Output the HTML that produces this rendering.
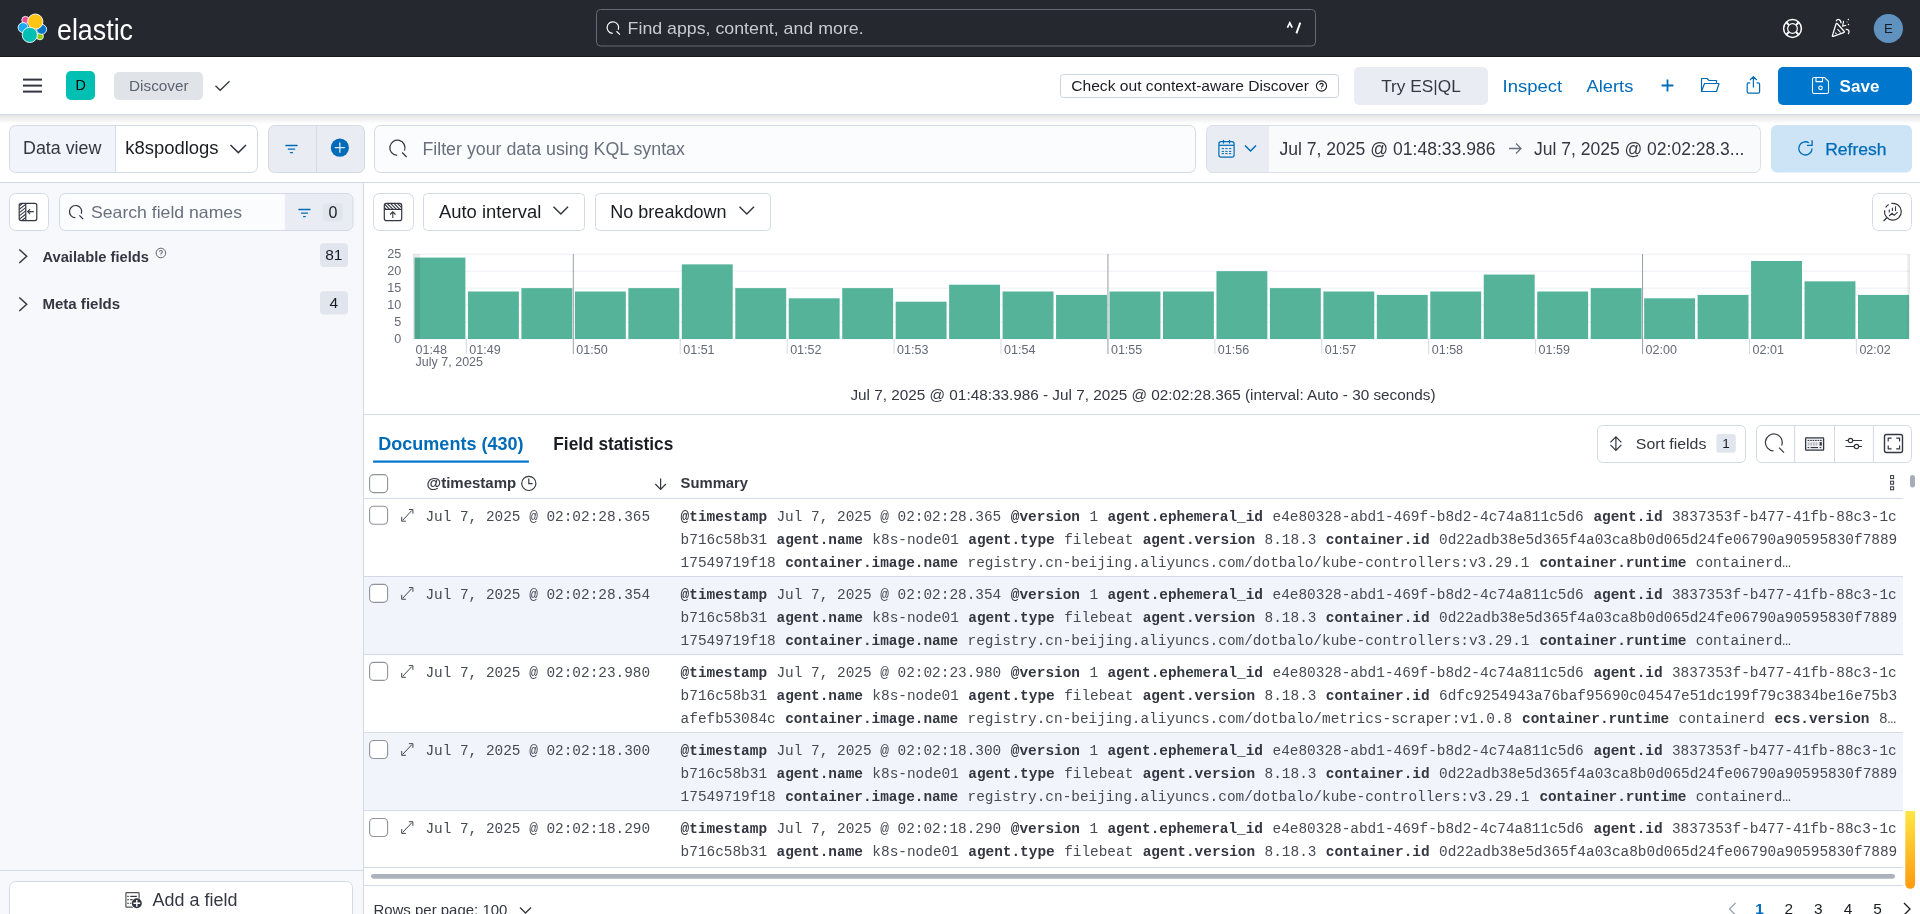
<!DOCTYPE html>
<html><head><meta charset="utf-8"><title>Discover - Elastic</title>
<style>html,body{margin:0;padding:0;width:1920px;height:914px;overflow:hidden;background:#fff;font-family:"Liberation Sans",sans-serif}svg{display:block;will-change:transform}</style>
</head><body>
<svg width="1920" height="914" viewBox="0 0 1920 914">
<rect x="0" y="0" width="1920" height="56" fill="#25282f" />
<rect x="0" y="56" width="1920" height="1" fill="#17191d" />
<circle cx="25.4" cy="20.0" r="3.6" fill="#f04e98" stroke="#fff" stroke-width="0.9"/>
<circle cx="23.1" cy="27.6" r="5.0" fill="#1ba9f5" stroke="#fff" stroke-width="0.9"/>
<circle cx="39.9" cy="36.3" r="3.5" fill="#93c90e" stroke="#fff" stroke-width="0.9"/>
<circle cx="41.6" cy="29.3" r="5.0" fill="#0077cc" stroke="#fff" stroke-width="0.9"/>
<circle cx="35.3" cy="21.6" r="7.6" fill="#fec514" stroke="#fff" stroke-width="0.9"/>
<circle cx="29.8" cy="34.9" r="7.6" fill="#00bfb3" stroke="#fff" stroke-width="0.9"/>
<g transform="translate(57,40.1) scale(1,1.13)"><text x="0" y="0" font-family="Liberation Sans" font-size="26.5" fill="#fff" textLength="76" lengthAdjust="spacingAndGlyphs">elastic</text></g>
<rect x="596.5" y="9.5" width="719" height="36.5" fill="#25282f" stroke="#676a72" stroke-width="1" rx="4" />
<path d="M612.70,33.40 A5.8,5.8 0 1 1 618.31,29.68 M616.51,31.21 L619.95,34.65" fill="none" stroke="#fff" stroke-width="1.2"/>
<text x="627.6" y="33.8" font-family="Liberation Sans" font-size="16.6" fill="#c8cbd1" textLength="236" lengthAdjust="spacingAndGlyphs" >Find apps, content, and more.</text>
<path d="M1287.4,27.6 L1289.8,22.8 L1292.2,27.6" fill="none" stroke="#fff" stroke-width="1.7" stroke-linejoin="miter"/>
<path d="M1300.3,22.6 L1296.4,33.4" fill="none" stroke="#fff" stroke-width="1.9" />
<g fill="none" stroke="#fff"><circle cx="1792.5" cy="28.5" r="8.9" stroke-width="1.5"/><circle cx="1792.5" cy="28.5" r="4.85" stroke-width="1.2"/></g>
<line x1="1796.0355339059327" y1="32.03553390593274" x2="1798.5104076400858" y2="34.51040764008565" stroke="#fff" stroke-width="1.9" />
<line x1="1788.9644660940673" y1="32.03553390593274" x2="1786.4895923599142" y2="34.51040764008565" stroke="#fff" stroke-width="1.9" />
<line x1="1788.9644660940673" y1="24.964466094067262" x2="1786.4895923599142" y2="22.489592359914347" stroke="#fff" stroke-width="1.9" />
<line x1="1796.0355339059327" y1="24.964466094067262" x2="1798.5104076400858" y2="22.489592359914344" stroke="#fff" stroke-width="1.9" />
<path d="M1832.4,35.6 L1835.9,24.2 Q1836.4,22.8 1837.4,23.8 L1844.1,31.2 Q1844.9,32.3 1843.6,32.7 L1833.3,36.3 Q1832,36.7 1832.4,35.6 Z" fill="none" stroke="#fff" stroke-width="1.3" stroke-linejoin="round"/>
<line x1="1837.5" y1="29.1" x2="1840.6" y2="32.5" stroke="#fff" stroke-width="1.1" />
<line x1="1835.2" y1="32.6" x2="1836.5" y2="34" stroke="#fff" stroke-width="1.1" />
<path d="M1836.1,21.3 C1837.5,18.6 1840.6,18.6 1841.1,23.2" fill="none" stroke="#fff" stroke-width="1.3" />
<path d="M1843.6,20.8 L1842.6,26.1 L1846.2,25.2" fill="none" stroke="#fff" stroke-width="1.1" stroke-linejoin="round"/>
<path d="M1845.7,29.5 C1848.6,28.8 1850.2,31.6 1848.2,34.1" fill="none" stroke="#fff" stroke-width="1.3" />
<circle cx="1848.4" cy="19.6" r="0.75" fill="#fff"/><circle cx="1848.5" cy="24.4" r="0.75" fill="#fff"/><circle cx="1847.1" cy="21.9" r="0.7" fill="#8a8d93"/>
<circle cx="1888.4" cy="28.5" r="14.6" fill="#6092c0"/>
<text x="1888.3" y="32.9" font-family="Liberation Sans" font-size="13.2" fill="#1a1c21" text-anchor="middle" >E</text>
<rect x="0" y="57" width="1920" height="57" fill="#fff" />
<rect x="0" y="114" width="1920" height="1" fill="#d3dae6" />
<defs><linearGradient id="shd" x1="0" y1="0" x2="0" y2="1"><stop offset="0" stop-color="#000" stop-opacity="0.10"/><stop offset="1" stop-color="#000" stop-opacity="0"/></linearGradient><linearGradient id="org" x1="0" y1="0" x2="0" y2="1"><stop offset="0" stop-color="#ffe645"/><stop offset="1" stop-color="#ff9a0e"/></linearGradient></defs>
<rect x="23" y="78.6" width="19" height="2" fill="#343741" />
<rect x="23" y="84.6" width="19" height="2" fill="#343741" />
<rect x="23" y="90.6" width="19" height="2" fill="#343741" />
<rect x="66" y="71" width="29" height="29" fill="#00bfb3" rx="5" />
<text x="80.6" y="90.4" font-family="Liberation Sans" font-size="14.3" fill="#000" text-anchor="middle" >D</text>
<rect x="114" y="72" width="89" height="28" fill="#e0e3e8" rx="5" />
<text x="129" y="91" font-family="Liberation Sans" font-size="15" fill="#5b6271" textLength="59.6" lengthAdjust="spacingAndGlyphs" >Discover</text>
<path d="M215.5,85.8 L220.2,90.3 L229.5,81.3" fill="none" stroke="#343741" stroke-width="1.3" />
<rect x="1060.5" y="74.5" width="278" height="23" fill="#fff" stroke="#c9d3e2" stroke-width="1" rx="3" />
<text x="1071.2" y="91" font-family="Liberation Sans" font-size="15" fill="#1a1c21" textLength="237.8" lengthAdjust="spacingAndGlyphs" >Check out context-aware Discover</text>
<circle cx="1321.5" cy="86.0" r="5.1" fill="none" stroke="#1a1c21" stroke-width="1.1"/>
<path d="M1319.85,84.70 Q1320.03,83.31 1321.50,83.31 Q1323.15,83.31 1323.15,84.70 Q1323.15,85.65 1322.11,86.17 Q1321.41,86.52 1321.41,87.21" fill="none" stroke="#1a1c21" stroke-width="1.1550000000000002" />
<circle cx="1321.41" cy="88.25" r="0.52" fill="#1a1c21"/>
<rect x="1354" y="67" width="134" height="38" fill="#e9edf3" rx="5" />
<text x="1381.2" y="92.3" font-family="Liberation Sans" font-size="17" fill="#343741" textLength="79.6" lengthAdjust="spacingAndGlyphs" >Try ES|QL</text>
<text x="1502.5" y="92.3" font-family="Liberation Sans" font-size="17" fill="#006bb8" textLength="59.6" lengthAdjust="spacingAndGlyphs" >Inspect</text>
<text x="1586.5" y="92.3" font-family="Liberation Sans" font-size="17" fill="#006bb8" textLength="46.8" lengthAdjust="spacingAndGlyphs" >Alerts</text>
<path d="M1667.5,79.6 V91.4 M1661.6,85.5 H1673.4" fill="none" stroke="#006bb8" stroke-width="1.8" />
<path d="M1701.5,91.5 V78.5 H1707 L1709,80.5 H1716.5 V83 M1701.5,91.5 L1704.5,83.5 H1719 L1716.5,91.5 Z" fill="none" stroke="#006bb8" stroke-width="1.2" stroke-linejoin="round"/>
<path d="M1750.2,82.8 H1748.6 Q1747.2,82.8 1747.2,84.2 V91.8 Q1747.2,93.2 1748.6,93.2 H1758.2 Q1759.6,93.2 1759.6,91.8 V84.2 Q1759.6,82.8 1758.2,82.8 H1756.6 M1753.4,87.6 V76.6 M1750,80 L1753.4,76.6 L1756.8,80" fill="none" stroke="#006bb8" stroke-width="1.2" stroke-linejoin="round"/>
<rect x="1778" y="67" width="134" height="38" fill="#0077cc" rx="5" />
<path d="M1814,77.5 H1824.5 L1828.5,81.5 V92 Q1828.5,93.5 1827,93.5 H1814 Q1812.5,93.5 1812.5,92 V79 Q1812.5,77.5 1814,77.5 Z M1816,77.5 V81.6 H1822.5 V77.5" fill="none" stroke="#fff" stroke-width="1.1" stroke-linejoin="round"/>
<circle cx="1820.5" cy="87.8" r="1.8" fill="none" stroke="#fff" stroke-width="1.1"/>
<text x="1839.6" y="92.2" font-family="Liberation Sans" font-size="17" fill="#fff" font-weight="700" textLength="39.8" lengthAdjust="spacingAndGlyphs" >Save</text>
<rect x="0" y="115" width="1920" height="68" fill="#fff" />
<rect x="0" y="115" width="1920" height="9" fill="url(#shd)" />
<rect x="0" y="182" width="1920" height="1" fill="#d3dae6" />
<clipPath id="dvc"><rect x="9.5" y="125.5" width="248" height="47" rx="6"/></clipPath>
<g clip-path="url(#dvc)">
<rect x="9.5" y="125.5" width="106" height="47" fill="#f1f4fa" />
</g>
<rect x="9.5" y="125.5" width="248" height="47" fill="none" stroke="#d3dae6" stroke-width="1" rx="6" />
<line x1="115.6" y1="125.5" x2="115.6" y2="172.5" stroke="#d3dae6" stroke-width="1" />
<text x="23" y="153.7" font-family="Liberation Sans" font-size="17.5" fill="#343741" textLength="78.4" lengthAdjust="spacingAndGlyphs" >Data view</text>
<text x="125.2" y="154.1" font-family="Liberation Sans" font-size="17.5" fill="#1a1c21" textLength="93.4" lengthAdjust="spacingAndGlyphs" >k8spodlogs</text>
<path d="M230.5,145 L238.3,152.6 L246,145" fill="none" stroke="#343741" stroke-width="1.5" />
<rect x="268.5" y="125.5" width="96" height="47" fill="#e9edf3" stroke="#d3dae6" stroke-width="1" rx="6" />
<line x1="316.6" y1="125.5" x2="316.6" y2="172.5" stroke="#d3dae6" stroke-width="1" />
<path d="M285.9,145.5 H297.1 M288.3,149.05 H294.7 M290.5,152.6 H292.5" fill="none" stroke="#006bb8" stroke-width="1.3" stroke-linecap="round"/>
<circle cx="339.85" cy="147.7" r="9.1" fill="#006bb8"/>
<path d="M339.85,142.6 V152.8 M334.75,147.7 H344.95" fill="none" stroke="#dde8f3" stroke-width="1.3" />
<rect x="374.5" y="125.5" width="821" height="47" fill="#fbfcfd" stroke="#d3dae6" stroke-width="1" rx="6" />
<path d="M397.13,155.40 A7.6,7.6 0 1 1 404.50,150.52 M402.13,152.53 L406.64,157.04" fill="none" stroke="#343741" stroke-width="1.3"/>
<text x="422.4" y="155" font-family="Liberation Sans" font-size="17.5" fill="#69707d" textLength="262.5" lengthAdjust="spacingAndGlyphs" >Filter your data using KQL syntax</text>
<clipPath id="dtc"><rect x="1206.5" y="125.5" width="554" height="47" rx="6"/></clipPath>
<g clip-path="url(#dtc)">
<rect x="1206.5" y="125.5" width="554" height="47" fill="#f9fafc" />
<rect x="1206.5" y="125.5" width="62.5" height="47" fill="#e9edf3" />
</g>
<rect x="1206.5" y="125.5" width="554" height="47" fill="none" stroke="#dcdfe5" stroke-width="1" rx="6" />
<rect x="1218.9" y="141.6" width="15.2" height="15.6" fill="none" stroke="#006bb8" stroke-width="1.2" rx="2.2" />
<line x1="1218.9" y1="145.3" x2="1234.1" y2="145.3" stroke="#006bb8" stroke-width="1.2" />
<line x1="1223.5" y1="139.9" x2="1223.5" y2="143.6" stroke="#006bb8" stroke-width="1.2" />
<line x1="1229.5" y1="139.9" x2="1229.5" y2="143.6" stroke="#006bb8" stroke-width="1.2" />
<rect x="1221.6999999999998" y="148.1" width="2.3" height="1.0" fill="#006bb8" />
<rect x="1225.25" y="148.1" width="2.3" height="1.0" fill="#006bb8" />
<rect x="1228.9499999999998" y="148.1" width="2.3" height="1.0" fill="#006bb8" />
<rect x="1221.6999999999998" y="150.9" width="2.3" height="1.0" fill="#006bb8" />
<rect x="1225.25" y="150.9" width="2.3" height="1.0" fill="#006bb8" />
<rect x="1228.9499999999998" y="150.9" width="2.3" height="1.0" fill="#006bb8" />
<rect x="1221.6999999999998" y="153.1" width="2.3" height="1.0" fill="#006bb8" />
<rect x="1225.25" y="153.1" width="2.3" height="1.0" fill="#006bb8" />
<rect x="1228.9499999999998" y="153.1" width="2.3" height="1.0" fill="#006bb8" />
<path d="M1245,145.5 L1250.5,151 L1256,145.5" fill="none" stroke="#006bb8" stroke-width="1.5" />
<text x="1279.4" y="155" font-family="Liberation Sans" font-size="17.5" fill="#343741" textLength="216.2" lengthAdjust="spacingAndGlyphs" >Jul 7, 2025 @ 01:48:33.986</text>
<path d="M1509,148.5 H1521 M1516,143.5 L1521,148.5 L1516,153.5" fill="none" stroke="#69707d" stroke-width="1.3" />
<text x="1534" y="155" font-family="Liberation Sans" font-size="17.5" fill="#343741" textLength="210.4" lengthAdjust="spacingAndGlyphs" >Jul 7, 2025 @ 02:02:28.3...</text>
<rect x="1771" y="125" width="141" height="47.5" fill="#cce4f5" rx="6" />
<path d="M1808.90,142.80 A6.6,6.6 0 1 0 1812.00,148.40" fill="none" stroke="#006bb8" stroke-width="1.3" />
<path d="M1812.1,140.2 V145.3 H1807" fill="none" stroke="#006bb8" stroke-width="1.3" stroke-linejoin="miter"/>
<text x="1825.2" y="154.6" font-family="Liberation Sans" font-size="17" fill="#006bb8" textLength="61.4" lengthAdjust="spacingAndGlyphs" stroke="#006bb8" stroke-width="0.25">Refresh</text>
<rect x="0" y="183" width="363" height="731" fill="#f7f8fc" />
<rect x="363" y="183" width="1" height="731" fill="#d3dae6" />
<rect x="9.5" y="193.5" width="39" height="37" fill="#fff" stroke="#d3dae6" stroke-width="1" rx="6" />
<clipPath id="hatch1"><rect x="19.6" y="203.6" width="6.2" height="17"/></clipPath>
<g clip-path="url(#hatch1)">
<line x1="18" y1="207.0" x2="27" y2="200.0" stroke="#343741" stroke-width="1.1" />
<line x1="18" y1="210.3" x2="27" y2="203.3" stroke="#343741" stroke-width="1.1" />
<line x1="18" y1="213.6" x2="27" y2="206.6" stroke="#343741" stroke-width="1.1" />
<line x1="18" y1="216.9" x2="27" y2="209.9" stroke="#343741" stroke-width="1.1" />
<line x1="18" y1="220.2" x2="27" y2="213.2" stroke="#343741" stroke-width="1.1" />
<line x1="18" y1="223.5" x2="27" y2="216.5" stroke="#343741" stroke-width="1.1" />
<line x1="18" y1="226.8" x2="27" y2="219.8" stroke="#343741" stroke-width="1.1" />
</g>
<rect x="19.2" y="203.4" width="17.6" height="17.2" fill="none" stroke="#343741" stroke-width="1.2" rx="2" />
<line x1="25.8" y1="203.4" x2="25.8" y2="220.6" stroke="#343741" stroke-width="1.2" />
<path d="M33.8,211.6 H27.9 M30.1,209.2 L27.7,211.6 L30.1,214" fill="none" stroke="#343741" stroke-width="1.1" />
<clipPath id="sfc"><rect x="59.5" y="193.5" width="293.5" height="37" rx="6"/></clipPath>
<g clip-path="url(#sfc)">
<rect x="59.5" y="193.5" width="293.5" height="37" fill="#fbfcfd" />
<rect x="284.8" y="193.5" width="70" height="37" fill="#e9edf3" />
</g>
<rect x="59.5" y="193.5" width="293.5" height="37" fill="none" stroke="#d3dae6" stroke-width="1" rx="6" />
<path d="M75.39,217.70 A6.1,6.1 0 1 1 81.29,213.79 M79.40,215.40 L83.02,219.02" fill="none" stroke="#343741" stroke-width="1.2"/>
<text x="91" y="218.4" font-family="Liberation Sans" font-size="16.5" fill="#69707d" textLength="151" lengthAdjust="spacingAndGlyphs" >Search field names</text>
<path d="M298.9,209.5 H310 M301.6,213.2 H307.5 M303.6,216.6 H305.3" fill="none" stroke="#006bb8" stroke-width="1.3" stroke-linecap="round"/>
<rect x="322.7" y="203.3" width="20.3" height="18.3" fill="#e0e5ee" rx="4" />
<text x="332.9" y="218.1" font-family="Liberation Sans" font-size="16" fill="#1a1c21" text-anchor="middle" >0</text>
<path d="M19.3,249.5 L26.7,256.2 L19.3,263" fill="none" stroke="#343741" stroke-width="1.5" />
<text x="42.4" y="261.5" font-family="Liberation Sans" font-size="15.2" fill="#343741" font-weight="700" textLength="106.6" lengthAdjust="spacingAndGlyphs" >Available fields</text>
<circle cx="160.9" cy="253.0" r="4.8" fill="none" stroke="#5f6570" stroke-width="1.0"/>
<path d="M159.35,251.78 Q159.51,250.47 160.90,250.47 Q162.45,250.47 162.45,251.78 Q162.45,252.67 161.47,253.16 Q160.82,253.49 160.82,254.14" fill="none" stroke="#5f6570" stroke-width="1.05" />
<circle cx="160.82" cy="255.12" r="0.49" fill="#5f6570"/>
<rect x="320" y="243.2" width="28" height="23.8" fill="#e0e5ee" rx="4" />
<text x="333.8" y="260.4" font-family="Liberation Sans" font-size="15.5" fill="#1a1c21" text-anchor="middle" >81</text>
<path d="M19.3,297.5 L26.7,304.2 L19.3,311" fill="none" stroke="#343741" stroke-width="1.5" />
<text x="42.4" y="309.3" font-family="Liberation Sans" font-size="15.2" fill="#343741" font-weight="700" textLength="77.8" lengthAdjust="spacingAndGlyphs" >Meta fields</text>
<rect x="320" y="291.2" width="28" height="23.3" fill="#e0e5ee" rx="4" />
<text x="333.8" y="308.4" font-family="Liberation Sans" font-size="15.5" fill="#1a1c21" text-anchor="middle" >4</text>
<rect x="0" y="870" width="363" height="1" fill="#d3dae6" />
<rect x="9.5" y="881.5" width="343" height="44" fill="#fff" stroke="#d3dae6" stroke-width="1" rx="6" />
<rect x="125.9" y="892.6" width="13.2" height="14.6" fill="none" stroke="#50545c" stroke-width="1.2" rx="0.6" />
<rect x="127.3" y="895.8" width="1.5" height="1.2" fill="#343741" />
<rect x="130.2" y="895.8" width="6.6" height="1.2" fill="#343741" />
<rect x="127.3" y="899.1" width="1.5" height="1.2" fill="#343741" />
<rect x="130.2" y="899.1" width="6.6" height="1.2" fill="#343741" />
<rect x="127.3" y="902.6999999999999" width="1.5" height="1.2" fill="#343741" />
<rect x="130.2" y="902.6999999999999" width="6.6" height="1.2" fill="#343741" />
<circle cx="136.8" cy="903.3" r="5.6" fill="#fff"/>
<circle cx="136.8" cy="903.3" r="5.0" fill="#343741"/>
<path d="M136.8,899.9 V906.7 M133.4,903.3 H140.2" fill="none" stroke="#fff" stroke-width="1.4" />
<text x="152.6" y="905.9" font-family="Liberation Sans" font-size="17.5" fill="#343741" textLength="84.8" lengthAdjust="spacingAndGlyphs" >Add a field</text>
<rect x="373.5" y="193.5" width="40" height="37" fill="#fff" stroke="#d3dae6" stroke-width="1" rx="6" />
<clipPath id="hatch2"><rect x="384.6" y="203.5" width="17" height="5.9"/></clipPath>
<g clip-path="url(#hatch2)">
<line x1="380.0" y1="203" x2="386.5" y2="209.6" stroke="#343741" stroke-width="1.1" />
<line x1="383.4" y1="203" x2="389.9" y2="209.6" stroke="#343741" stroke-width="1.1" />
<line x1="386.8" y1="203" x2="393.3" y2="209.6" stroke="#343741" stroke-width="1.1" />
<line x1="390.2" y1="203" x2="396.7" y2="209.6" stroke="#343741" stroke-width="1.1" />
<line x1="393.6" y1="203" x2="400.1" y2="209.6" stroke="#343741" stroke-width="1.1" />
<line x1="397.0" y1="203" x2="403.5" y2="209.6" stroke="#343741" stroke-width="1.1" />
<line x1="400.4" y1="203" x2="406.9" y2="209.6" stroke="#343741" stroke-width="1.1" />
<line x1="403.8" y1="203" x2="410.3" y2="209.6" stroke="#343741" stroke-width="1.1" />
</g>
<rect x="384.3" y="203.4" width="17.4" height="17.2" fill="none" stroke="#343741" stroke-width="1.2" rx="2.2" />
<line x1="384.3" y1="209.4" x2="401.7" y2="209.4" stroke="#343741" stroke-width="1.2" />
<path d="M392.8,217.9 V212 M390.1,214.5 L392.8,211.8 L395.5,214.5" fill="none" stroke="#343741" stroke-width="1.1" />
<rect x="423.5" y="193.5" width="161" height="37" fill="#fff" stroke="#d3dae6" stroke-width="1" rx="4" />
<text x="439" y="218.2" font-family="Liberation Sans" font-size="17.5" fill="#1a1c21" textLength="102.3" lengthAdjust="spacingAndGlyphs" >Auto interval</text>
<path d="M553.5,206.8 L560.8,214 L568,206.8" fill="none" stroke="#343741" stroke-width="1.5" />
<rect x="595.5" y="193.5" width="175" height="37" fill="#fff" stroke="#d3dae6" stroke-width="1" rx="4" />
<text x="610.3" y="218.2" font-family="Liberation Sans" font-size="17.5" fill="#1a1c21" textLength="116.2" lengthAdjust="spacingAndGlyphs" >No breakdown</text>
<path d="M739.5,206.8 L746.8,214 L754,206.8" fill="none" stroke="#343741" stroke-width="1.5" />
<rect x="1872.5" y="193.5" width="39" height="37" fill="#fff" stroke="#d3dae6" stroke-width="1" rx="6" />
<path d="M1891.37,203.44 A8.4,8.4 0 1 1 1884.63,210.24 M1885.63,207.50 A8.4,8.4 0 0 1 1888.70,204.43" fill="none" stroke="#343741" stroke-width="1.2" />
<line x1="1886.8" y1="217.8" x2="1883.6" y2="221" stroke="#343741" stroke-width="1.3" />
<path d="M1889.1,216 L1892.1,213.3 L1894.2,215.3 L1897.6,212.1" fill="none" stroke="#343741" stroke-width="1.1" />
<line x1="1889.3" y1="209.5" x2="1889.3" y2="212.6" stroke="#343741" stroke-width="1.1" />
<line x1="1892.4" y1="207.8" x2="1892.4" y2="211.1" stroke="#343741" stroke-width="1.1" />
<line x1="1895.5" y1="206.3" x2="1895.5" y2="211.1" stroke="#343741" stroke-width="1.1" />
<line x1="413.4" y1="254.2" x2="1910" y2="254.2" stroke="#eceff5" stroke-width="1" />
<line x1="413.4" y1="271.1" x2="1910" y2="271.1" stroke="#eceff5" stroke-width="1" />
<line x1="413.4" y1="288.1" x2="1910" y2="288.1" stroke="#eceff5" stroke-width="1" />
<line x1="413.4" y1="305.0" x2="1910" y2="305.0" stroke="#eceff5" stroke-width="1" />
<line x1="413.4" y1="322.0" x2="1910" y2="322.0" stroke="#eceff5" stroke-width="1" />
<line x1="413.4" y1="339.0" x2="1910" y2="339.0" stroke="#eceff5" stroke-width="1" />
<line x1="413.4" y1="254" x2="413.4" y2="339" stroke="#e8ebf2" stroke-width="1" />
<text x="401.2" y="257.9" font-family="Liberation Sans" font-size="12.6" fill="#646a77" text-anchor="end" >25</text>
<text x="401.2" y="274.8" font-family="Liberation Sans" font-size="12.6" fill="#646a77" text-anchor="end" >20</text>
<text x="401.2" y="291.8" font-family="Liberation Sans" font-size="12.6" fill="#646a77" text-anchor="end" >15</text>
<text x="401.2" y="308.7" font-family="Liberation Sans" font-size="12.6" fill="#646a77" text-anchor="end" >10</text>
<text x="401.2" y="325.7" font-family="Liberation Sans" font-size="12.6" fill="#646a77" text-anchor="end" >5</text>
<text x="401.2" y="342.7" font-family="Liberation Sans" font-size="12.6" fill="#646a77" text-anchor="end" >0</text>
<rect x="414.5" y="257.59" width="50.9" height="81.41" fill="#54b399" />
<rect x="467.96" y="291.51" width="50.9" height="47.49" fill="#54b399" />
<rect x="521.43" y="288.12" width="50.9" height="50.88" fill="#54b399" />
<rect x="574.89" y="291.51" width="50.9" height="47.49" fill="#54b399" />
<rect x="628.35" y="288.12" width="50.9" height="50.88" fill="#54b399" />
<rect x="681.81" y="264.38" width="50.9" height="74.62" fill="#54b399" />
<rect x="735.28" y="288.12" width="50.9" height="50.88" fill="#54b399" />
<rect x="788.74" y="298.3" width="50.9" height="40.7" fill="#54b399" />
<rect x="842.2" y="288.12" width="50.9" height="50.88" fill="#54b399" />
<rect x="895.67" y="301.69" width="50.9" height="37.31" fill="#54b399" />
<rect x="949.13" y="284.73" width="50.9" height="54.27" fill="#54b399" />
<rect x="1002.59" y="291.51" width="50.9" height="47.49" fill="#54b399" />
<rect x="1056.06" y="294.9" width="50.9" height="44.1" fill="#54b399" />
<rect x="1109.52" y="291.51" width="50.9" height="47.49" fill="#54b399" />
<rect x="1162.98" y="291.51" width="50.9" height="47.49" fill="#54b399" />
<rect x="1216.44" y="271.16" width="50.9" height="67.84" fill="#54b399" />
<rect x="1269.91" y="288.12" width="50.9" height="50.88" fill="#54b399" />
<rect x="1323.37" y="291.51" width="50.9" height="47.49" fill="#54b399" />
<rect x="1376.83" y="294.9" width="50.9" height="44.1" fill="#54b399" />
<rect x="1430.3" y="291.51" width="50.9" height="47.49" fill="#54b399" />
<rect x="1483.76" y="274.55" width="50.9" height="64.45" fill="#54b399" />
<rect x="1537.22" y="291.51" width="50.9" height="47.49" fill="#54b399" />
<rect x="1590.69" y="288.12" width="50.9" height="50.88" fill="#54b399" />
<rect x="1644.15" y="298.3" width="50.9" height="40.7" fill="#54b399" />
<rect x="1697.61" y="294.9" width="50.9" height="44.1" fill="#54b399" />
<rect x="1751.08" y="260.98" width="50.9" height="78.02" fill="#54b399" />
<rect x="1804.54" y="281.34" width="50.9" height="57.66" fill="#54b399" />
<rect x="1858.0" y="294.9" width="50.9" height="44.1" fill="#54b399" />
<rect x="413.4" y="254" width="6.6" height="85" fill="#000" opacity="0.08"/>
<rect x="1907.4" y="254" width="2.6" height="85" fill="#000" opacity="0.08"/>
<line x1="466.363" y1="339" x2="466.363" y2="354" stroke="#d6dae0" stroke-width="1" />
<text x="469.363" y="353.8" font-family="Liberation Sans" font-size="12.6" fill="#646a77" textLength="31.4" lengthAdjust="spacingAndGlyphs" >01:49</text>
<line x1="573.289" y1="254" x2="573.289" y2="354" stroke="#9da2aa" stroke-width="1.05" />
<text x="576.289" y="353.8" font-family="Liberation Sans" font-size="12.6" fill="#646a77" textLength="31.4" lengthAdjust="spacingAndGlyphs" >01:50</text>
<line x1="680.215" y1="339" x2="680.215" y2="354" stroke="#d6dae0" stroke-width="1" />
<text x="683.215" y="353.8" font-family="Liberation Sans" font-size="12.6" fill="#646a77" textLength="31.4" lengthAdjust="spacingAndGlyphs" >01:51</text>
<line x1="787.1410000000001" y1="339" x2="787.1410000000001" y2="354" stroke="#d6dae0" stroke-width="1" />
<text x="790.1410000000001" y="353.8" font-family="Liberation Sans" font-size="12.6" fill="#646a77" textLength="31.4" lengthAdjust="spacingAndGlyphs" >01:52</text>
<line x1="894.067" y1="339" x2="894.067" y2="354" stroke="#d6dae0" stroke-width="1" />
<text x="897.067" y="353.8" font-family="Liberation Sans" font-size="12.6" fill="#646a77" textLength="31.4" lengthAdjust="spacingAndGlyphs" >01:53</text>
<line x1="1000.9929999999999" y1="339" x2="1000.9929999999999" y2="354" stroke="#d6dae0" stroke-width="1" />
<text x="1003.9929999999999" y="353.8" font-family="Liberation Sans" font-size="12.6" fill="#646a77" textLength="31.4" lengthAdjust="spacingAndGlyphs" >01:54</text>
<line x1="1107.919" y1="254" x2="1107.919" y2="354" stroke="#9da2aa" stroke-width="1.05" />
<text x="1110.919" y="353.8" font-family="Liberation Sans" font-size="12.6" fill="#646a77" textLength="31.4" lengthAdjust="spacingAndGlyphs" >01:55</text>
<line x1="1214.845" y1="339" x2="1214.845" y2="354" stroke="#d6dae0" stroke-width="1" />
<text x="1217.845" y="353.8" font-family="Liberation Sans" font-size="12.6" fill="#646a77" textLength="31.4" lengthAdjust="spacingAndGlyphs" >01:56</text>
<line x1="1321.771" y1="339" x2="1321.771" y2="354" stroke="#d6dae0" stroke-width="1" />
<text x="1324.771" y="353.8" font-family="Liberation Sans" font-size="12.6" fill="#646a77" textLength="31.4" lengthAdjust="spacingAndGlyphs" >01:57</text>
<line x1="1428.6970000000001" y1="339" x2="1428.6970000000001" y2="354" stroke="#d6dae0" stroke-width="1" />
<text x="1431.6970000000001" y="353.8" font-family="Liberation Sans" font-size="12.6" fill="#646a77" textLength="31.4" lengthAdjust="spacingAndGlyphs" >01:58</text>
<line x1="1535.623" y1="339" x2="1535.623" y2="354" stroke="#d6dae0" stroke-width="1" />
<text x="1538.623" y="353.8" font-family="Liberation Sans" font-size="12.6" fill="#646a77" textLength="31.4" lengthAdjust="spacingAndGlyphs" >01:59</text>
<line x1="1642.5490000000002" y1="254" x2="1642.5490000000002" y2="354" stroke="#9da2aa" stroke-width="1.05" />
<text x="1645.5490000000002" y="353.8" font-family="Liberation Sans" font-size="12.6" fill="#646a77" textLength="31.4" lengthAdjust="spacingAndGlyphs" >02:00</text>
<line x1="1749.4750000000001" y1="339" x2="1749.4750000000001" y2="354" stroke="#d6dae0" stroke-width="1" />
<text x="1752.4750000000001" y="353.8" font-family="Liberation Sans" font-size="12.6" fill="#646a77" textLength="31.4" lengthAdjust="spacingAndGlyphs" >02:01</text>
<line x1="1856.401" y1="339" x2="1856.401" y2="354" stroke="#d6dae0" stroke-width="1" />
<text x="1859.401" y="353.8" font-family="Liberation Sans" font-size="12.6" fill="#646a77" textLength="31.4" lengthAdjust="spacingAndGlyphs" >02:02</text>
<text x="415.6" y="353.8" font-family="Liberation Sans" font-size="12.6" fill="#646a77" textLength="31.4" lengthAdjust="spacingAndGlyphs" >01:48</text>
<text x="415.6" y="365.9" font-family="Liberation Sans" font-size="12.6" fill="#646a77" textLength="67.4" lengthAdjust="spacingAndGlyphs" >July 7, 2025</text>
<text x="850.4" y="400.2" font-family="Liberation Sans" font-size="15.3" fill="#343741" textLength="585.2" lengthAdjust="spacingAndGlyphs" >Jul 7, 2025 @ 01:48:33.986 - Jul 7, 2025 @ 02:02:28.365 (interval: Auto - 30 seconds)</text>
<rect x="364" y="414" width="1556" height="1" fill="#d3dae6" />
<text x="378.3" y="450" font-family="Liberation Sans" font-size="17.5" fill="#006bb8" font-weight="700" textLength="145.2" lengthAdjust="spacingAndGlyphs" >Documents (430)</text>
<rect x="373.1" y="460.5" width="155.8" height="2.2" fill="#0077cc" />
<text x="553.3" y="450" font-family="Liberation Sans" font-size="17.5" fill="#1a1c21" font-weight="700" textLength="120" lengthAdjust="spacingAndGlyphs" >Field statistics</text>
<rect x="1597.5" y="425.5" width="148" height="37" fill="#fff" stroke="#d3dae6" stroke-width="1" rx="5" />
<path d="M1615.9,437 V450.2 M1610.4,442.3 L1615.9,436.8 L1621.4,442.3 M1610.4,444.9 L1615.9,450.4 L1621.4,444.9" fill="none" stroke="#343741" stroke-width="1.2" />
<text x="1635.8" y="448.6" font-family="Liberation Sans" font-size="15.4" fill="#343741" textLength="70.6" lengthAdjust="spacingAndGlyphs" >Sort fields</text>
<rect x="1716.4" y="434" width="19.4" height="18.7" fill="#e0e5ee" rx="3" />
<text x="1726" y="448.2" font-family="Liberation Sans" font-size="13.5" fill="#1a1c21" text-anchor="middle" >1</text>
<rect x="1756.5" y="425.5" width="155" height="37" fill="#fff" stroke="#d3dae6" stroke-width="1" rx="5" />
<line x1="1794.6" y1="425.5" x2="1794.6" y2="462.5" stroke="#d3dae6" stroke-width="1" />
<line x1="1834.5" y1="425.5" x2="1834.5" y2="462.5" stroke="#d3dae6" stroke-width="1" />
<line x1="1873.4" y1="425.5" x2="1873.4" y2="462.5" stroke="#d3dae6" stroke-width="1" />
<path d="M1773.51,450.79 A8.4,8.4 0 1 1 1781.64,445.41 M1779.03,447.63 L1784.02,452.62" fill="none" stroke="#343741" stroke-width="1.2"/>
<rect x="1805.6" y="437.8" width="18" height="12.4" fill="#f0f1f3" stroke="#343741" stroke-width="1.3" rx="0.5" />
<rect x="1807.6" y="439.9" width="1.6" height="1.1" fill="#343741" />
<rect x="1810.1" y="439.9" width="1.6" height="1.1" fill="#343741" />
<rect x="1812.6" y="439.9" width="1.6" height="1.1" fill="#343741" />
<rect x="1815.1" y="439.9" width="1.6" height="1.1" fill="#343741" />
<rect x="1817.6" y="439.9" width="1.6" height="1.1" fill="#343741" />
<rect x="1820.1" y="439.9" width="1.6" height="1.1" fill="#343741" />
<rect x="1807.8" y="442.4" width="1.8" height="3.2" fill="#b9bcc2" />
<rect x="1810.3999999999999" y="442.4" width="1.8" height="3.2" fill="#b9bcc2" />
<rect x="1813.0" y="442.4" width="1.8" height="3.2" fill="#b9bcc2" />
<rect x="1815.6" y="442.4" width="1.8" height="3.2" fill="#b9bcc2" />
<rect x="1819.6" y="442.1" width="2.2" height="3.6" fill="#343741" />
<rect x="1807.6" y="447" width="1.6" height="1.1" fill="#343741" />
<rect x="1810.6" y="447" width="7.4" height="1.1" fill="#343741" />
<rect x="1819.6" y="447" width="1.6" height="1.1" fill="#343741" />
<path d="M1845.5,440.5 H1862 M1845.5,446.5 H1862" fill="none" stroke="#343741" stroke-width="1.2" />
<circle cx="1850.5" cy="440.5" r="2.2" fill="#fff" stroke="#343741" stroke-width="1.2"/><circle cx="1856.5" cy="446.5" r="2.2" fill="#fff" stroke="#343741" stroke-width="1.2"/>
<rect x="1884.5" y="434.5" width="18" height="18" fill="none" stroke="#343741" stroke-width="1.4" rx="2" />
<path d="M1888.2,441.6 V438.2 H1891.6 M1896.2,438.2 H1899.6 V441.6 M1899.6,445.4 V448.8 H1896.2 M1891.6,448.8 H1888.2 V445.4" fill="none" stroke="#343741" stroke-width="1.2" stroke-linejoin="miter" stroke-linecap="butt"/>
<rect x="369.6" y="474.6" width="18" height="18" fill="#fff" stroke="#909399" stroke-width="1.1" rx="4" />
<text x="426.6" y="487.6" font-family="Liberation Sans" font-size="14.6" fill="#343741" font-weight="700" textLength="89.6" lengthAdjust="spacingAndGlyphs" >@timestamp</text>
<circle cx="528.8" cy="483.4" r="7.1" fill="none" stroke="#343741" stroke-width="1.2"/>
<path d="M528.8,478.6 V483.6 H532.6" fill="none" stroke="#343741" stroke-width="1.2" />
<path d="M660.6,478.5 V489.2 M655.3,484 L660.6,489.3 L665.9,484" fill="none" stroke="#343741" stroke-width="1.2" />
<text x="680.6" y="487.6" font-family="Liberation Sans" font-size="14.6" fill="#343741" font-weight="700" textLength="67.4" lengthAdjust="spacingAndGlyphs" >Summary</text>
<rect x="1890.6" y="475.6" width="3" height="3" fill="none" stroke="#343741" stroke-width="1" />
<rect x="1890.6" y="481.2" width="3" height="3" fill="none" stroke="#343741" stroke-width="1" />
<rect x="1890.6" y="486.8" width="3" height="3" fill="none" stroke="#343741" stroke-width="1" />
<rect x="1910" y="475" width="5" height="12.5" fill="#a7acb6" rx="2.5" />
<rect x="364" y="498" width="1539" height="1" fill="#d3dae6" />
<rect x="364" y="576.0" width="1539" height="1" fill="#d3dae6" />
<rect x="369.6" y="506.3" width="18" height="18" fill="#fff" stroke="#909399" stroke-width="1.1" rx="4" />
<path d="M402.6,520.30 L411.8,510.50 M401.7,516.80 V521.20 H405.9 M408.9,509.50 H412.9 V513.70" fill="none" stroke="#41454e" stroke-width="1.0" stroke-linejoin="miter"/>
<text y="520.6" font-family="Liberation Mono" font-size="14.42" fill="#464a53" xml:space="preserve"><tspan x="425.40">Jul 7, 2025 @ 02:02:28.365</tspan></text>
<text y="520.6" font-family="Liberation Mono" font-size="14.42" fill="#464a53" xml:space="preserve"><tspan x="680.60" font-weight="700" fill="#343741">@timestamp</tspan><tspan x="767.83"> Jul 7, 2025 @ 02:02:28.365 </tspan><tspan x="1010.83" font-weight="700" fill="#343741">@version</tspan><tspan x="1080.76"> 1 </tspan><tspan x="1107.42" font-weight="700" fill="#343741">agent.ephemeral_id</tspan><tspan x="1263.88"> e4e80328-abd1-469f-b8d2-4c74a811c5d6 </tspan><tspan x="1593.41" font-weight="700" fill="#343741">agent.id</tspan><tspan x="1663.34"> 3837353f-b477-41fb-88c3-1c</tspan></text>
<text y="543.7" font-family="Liberation Mono" font-size="14.42" fill="#464a53" xml:space="preserve"><tspan x="680.60">b716c58b31 </tspan><tspan x="776.49" font-weight="700" fill="#343741">agent.name</tspan><tspan x="863.72"> k8s-node01 </tspan><tspan x="968.26" font-weight="700" fill="#343741">agent.type</tspan><tspan x="1055.50"> filebeat </tspan><tspan x="1142.73" font-weight="700" fill="#343741">agent.version</tspan><tspan x="1255.92"> 8.18.3 </tspan><tspan x="1325.85" font-weight="700" fill="#343741">container.id</tspan><tspan x="1430.39"> 0d22adb38e5d365f4a03ca8b0d065d24fe06790a90595830f7889</tspan></text>
<text y="566.8" font-family="Liberation Mono" font-size="14.42" fill="#464a53" xml:space="preserve"><tspan x="680.60">17549719f18 </tspan><tspan x="785.14" font-weight="700" fill="#343741">container.image.name</tspan><tspan x="958.91"> registry.cn-beijing.aliyuncs.com/dotbalo/kube-controllers:v3.29.1 </tspan><tspan x="1539.39" font-weight="700" fill="#343741">container.runtime</tspan><tspan x="1687.20"> containerd…</tspan></text>
<rect x="364" y="577.05" width="1539" height="77.5" fill="#f1f4fa" />
<rect x="364" y="654.05" width="1539" height="1" fill="#d3dae6" />
<rect x="369.6" y="584.3499999999999" width="18" height="18" fill="#fff" stroke="#909399" stroke-width="1.1" rx="4" />
<path d="M402.6,598.35 L411.8,588.55 M401.7,594.85 V599.25 H405.9 M408.9,587.55 H412.9 V591.75" fill="none" stroke="#41454e" stroke-width="1.0" stroke-linejoin="miter"/>
<text y="598.65" font-family="Liberation Mono" font-size="14.42" fill="#464a53" xml:space="preserve"><tspan x="425.40">Jul 7, 2025 @ 02:02:28.354</tspan></text>
<text y="598.65" font-family="Liberation Mono" font-size="14.42" fill="#464a53" xml:space="preserve"><tspan x="680.60" font-weight="700" fill="#343741">@timestamp</tspan><tspan x="767.83"> Jul 7, 2025 @ 02:02:28.354 </tspan><tspan x="1010.83" font-weight="700" fill="#343741">@version</tspan><tspan x="1080.76"> 1 </tspan><tspan x="1107.42" font-weight="700" fill="#343741">agent.ephemeral_id</tspan><tspan x="1263.88"> e4e80328-abd1-469f-b8d2-4c74a811c5d6 </tspan><tspan x="1593.41" font-weight="700" fill="#343741">agent.id</tspan><tspan x="1663.34"> 3837353f-b477-41fb-88c3-1c</tspan></text>
<text y="621.75" font-family="Liberation Mono" font-size="14.42" fill="#464a53" xml:space="preserve"><tspan x="680.60">b716c58b31 </tspan><tspan x="776.49" font-weight="700" fill="#343741">agent.name</tspan><tspan x="863.72"> k8s-node01 </tspan><tspan x="968.26" font-weight="700" fill="#343741">agent.type</tspan><tspan x="1055.50"> filebeat </tspan><tspan x="1142.73" font-weight="700" fill="#343741">agent.version</tspan><tspan x="1255.92"> 8.18.3 </tspan><tspan x="1325.85" font-weight="700" fill="#343741">container.id</tspan><tspan x="1430.39"> 0d22adb38e5d365f4a03ca8b0d065d24fe06790a90595830f7889</tspan></text>
<text y="644.8499999999999" font-family="Liberation Mono" font-size="14.42" fill="#464a53" xml:space="preserve"><tspan x="680.60">17549719f18 </tspan><tspan x="785.14" font-weight="700" fill="#343741">container.image.name</tspan><tspan x="958.91"> registry.cn-beijing.aliyuncs.com/dotbalo/kube-controllers:v3.29.1 </tspan><tspan x="1539.39" font-weight="700" fill="#343741">container.runtime</tspan><tspan x="1687.20"> containerd…</tspan></text>
<rect x="364" y="732.1" width="1539" height="1" fill="#d3dae6" />
<rect x="369.6" y="662.4" width="18" height="18" fill="#fff" stroke="#909399" stroke-width="1.1" rx="4" />
<path d="M402.6,676.40 L411.8,666.60 M401.7,672.90 V677.30 H405.9 M408.9,665.60 H412.9 V669.80" fill="none" stroke="#41454e" stroke-width="1.0" stroke-linejoin="miter"/>
<text y="676.7" font-family="Liberation Mono" font-size="14.42" fill="#464a53" xml:space="preserve"><tspan x="425.40">Jul 7, 2025 @ 02:02:23.980</tspan></text>
<text y="676.7" font-family="Liberation Mono" font-size="14.42" fill="#464a53" xml:space="preserve"><tspan x="680.60" font-weight="700" fill="#343741">@timestamp</tspan><tspan x="767.83"> Jul 7, 2025 @ 02:02:23.980 </tspan><tspan x="1010.83" font-weight="700" fill="#343741">@version</tspan><tspan x="1080.76"> 1 </tspan><tspan x="1107.42" font-weight="700" fill="#343741">agent.ephemeral_id</tspan><tspan x="1263.88"> e4e80328-abd1-469f-b8d2-4c74a811c5d6 </tspan><tspan x="1593.41" font-weight="700" fill="#343741">agent.id</tspan><tspan x="1663.34"> 3837353f-b477-41fb-88c3-1c</tspan></text>
<text y="699.8000000000001" font-family="Liberation Mono" font-size="14.42" fill="#464a53" xml:space="preserve"><tspan x="680.60">b716c58b31 </tspan><tspan x="776.49" font-weight="700" fill="#343741">agent.name</tspan><tspan x="863.72"> k8s-node01 </tspan><tspan x="968.26" font-weight="700" fill="#343741">agent.type</tspan><tspan x="1055.50"> filebeat </tspan><tspan x="1142.73" font-weight="700" fill="#343741">agent.version</tspan><tspan x="1255.92"> 8.18.3 </tspan><tspan x="1325.85" font-weight="700" fill="#343741">container.id</tspan><tspan x="1430.39"> 6dfc9254943a76baf95690c04547e51dc199f79c3834be16e75b3</tspan></text>
<text y="722.9" font-family="Liberation Mono" font-size="14.42" fill="#464a53" xml:space="preserve"><tspan x="680.60">afefb53084c </tspan><tspan x="785.14" font-weight="700" fill="#343741">container.image.name</tspan><tspan x="958.91"> registry.cn-beijing.aliyuncs.com/dotbalo/metrics-scraper:v1.0.8 </tspan><tspan x="1522.08" font-weight="700" fill="#343741">container.runtime</tspan><tspan x="1669.89"> containerd </tspan><tspan x="1774.43" font-weight="700" fill="#343741">ecs.version</tspan><tspan x="1870.32"> 8…</tspan></text>
<rect x="364" y="733.15" width="1539" height="77.5" fill="#f1f4fa" />
<rect x="364" y="810.15" width="1539" height="1" fill="#d3dae6" />
<rect x="369.6" y="740.4499999999999" width="18" height="18" fill="#fff" stroke="#909399" stroke-width="1.1" rx="4" />
<path d="M402.6,754.45 L411.8,744.65 M401.7,750.95 V755.35 H405.9 M408.9,743.65 H412.9 V747.85" fill="none" stroke="#41454e" stroke-width="1.0" stroke-linejoin="miter"/>
<text y="754.75" font-family="Liberation Mono" font-size="14.42" fill="#464a53" xml:space="preserve"><tspan x="425.40">Jul 7, 2025 @ 02:02:18.300</tspan></text>
<text y="754.75" font-family="Liberation Mono" font-size="14.42" fill="#464a53" xml:space="preserve"><tspan x="680.60" font-weight="700" fill="#343741">@timestamp</tspan><tspan x="767.83"> Jul 7, 2025 @ 02:02:18.300 </tspan><tspan x="1010.83" font-weight="700" fill="#343741">@version</tspan><tspan x="1080.76"> 1 </tspan><tspan x="1107.42" font-weight="700" fill="#343741">agent.ephemeral_id</tspan><tspan x="1263.88"> e4e80328-abd1-469f-b8d2-4c74a811c5d6 </tspan><tspan x="1593.41" font-weight="700" fill="#343741">agent.id</tspan><tspan x="1663.34"> 3837353f-b477-41fb-88c3-1c</tspan></text>
<text y="777.85" font-family="Liberation Mono" font-size="14.42" fill="#464a53" xml:space="preserve"><tspan x="680.60">b716c58b31 </tspan><tspan x="776.49" font-weight="700" fill="#343741">agent.name</tspan><tspan x="863.72"> k8s-node01 </tspan><tspan x="968.26" font-weight="700" fill="#343741">agent.type</tspan><tspan x="1055.50"> filebeat </tspan><tspan x="1142.73" font-weight="700" fill="#343741">agent.version</tspan><tspan x="1255.92"> 8.18.3 </tspan><tspan x="1325.85" font-weight="700" fill="#343741">container.id</tspan><tspan x="1430.39"> 0d22adb38e5d365f4a03ca8b0d065d24fe06790a90595830f7889</tspan></text>
<text y="800.9499999999999" font-family="Liberation Mono" font-size="14.42" fill="#464a53" xml:space="preserve"><tspan x="680.60">17549719f18 </tspan><tspan x="785.14" font-weight="700" fill="#343741">container.image.name</tspan><tspan x="958.91"> registry.cn-beijing.aliyuncs.com/dotbalo/kube-controllers:v3.29.1 </tspan><tspan x="1539.39" font-weight="700" fill="#343741">container.runtime</tspan><tspan x="1687.20"> containerd…</tspan></text>
<rect x="369.6" y="818.5" width="18" height="18" fill="#fff" stroke="#909399" stroke-width="1.1" rx="4" />
<path d="M402.6,832.50 L411.8,822.70 M401.7,829.00 V833.40 H405.9 M408.9,821.70 H412.9 V825.90" fill="none" stroke="#41454e" stroke-width="1.0" stroke-linejoin="miter"/>
<text y="832.8000000000001" font-family="Liberation Mono" font-size="14.42" fill="#464a53" xml:space="preserve"><tspan x="425.40">Jul 7, 2025 @ 02:02:18.290</tspan></text>
<text y="832.8000000000001" font-family="Liberation Mono" font-size="14.42" fill="#464a53" xml:space="preserve"><tspan x="680.60" font-weight="700" fill="#343741">@timestamp</tspan><tspan x="767.83"> Jul 7, 2025 @ 02:02:18.290 </tspan><tspan x="1010.83" font-weight="700" fill="#343741">@version</tspan><tspan x="1080.76"> 1 </tspan><tspan x="1107.42" font-weight="700" fill="#343741">agent.ephemeral_id</tspan><tspan x="1263.88"> e4e80328-abd1-469f-b8d2-4c74a811c5d6 </tspan><tspan x="1593.41" font-weight="700" fill="#343741">agent.id</tspan><tspan x="1663.34"> 3837353f-b477-41fb-88c3-1c</tspan></text>
<text y="855.9000000000001" font-family="Liberation Mono" font-size="14.42" fill="#464a53" xml:space="preserve"><tspan x="680.60">b716c58b31 </tspan><tspan x="776.49" font-weight="700" fill="#343741">agent.name</tspan><tspan x="863.72"> k8s-node01 </tspan><tspan x="968.26" font-weight="700" fill="#343741">agent.type</tspan><tspan x="1055.50"> filebeat </tspan><tspan x="1142.73" font-weight="700" fill="#343741">agent.version</tspan><tspan x="1255.92"> 8.18.3 </tspan><tspan x="1325.85" font-weight="700" fill="#343741">container.id</tspan><tspan x="1430.39"> 0d22adb38e5d365f4a03ca8b0d065d24fe06790a90595830f7889</tspan></text>
<rect x="364" y="867" width="1539" height="1" fill="#d3dae6" />
<rect x="364" y="868" width="1556" height="46" fill="#fff" />
<rect x="371" y="874" width="1524" height="4.7" fill="#adb2bc" rx="2.35" />
<rect x="364" y="885" width="1539" height="1" fill="#d3dae6" />
<rect x="1903" y="868" width="17" height="46" fill="#fff" />
<path d="M1905.3,811 H1915.1 V884 A4.9,4.9 0 0 1 1905.3,884 Z" fill="url(#org)"/>
<text x="373.4" y="914.5" font-family="Liberation Sans" font-size="15.4" fill="#343741" textLength="134" lengthAdjust="spacingAndGlyphs" >Rows per page: 100</text>
<path d="M520,907.5 L525.5,913 L531,907.5" fill="none" stroke="#343741" stroke-width="1.3" />
<path d="M1735.5,903 L1729.5,909 L1735.5,915" fill="none" stroke="#98a2b3" stroke-width="1.3" />
<text x="1759.6" y="914" font-family="Liberation Sans" font-size="15.4" fill="#006bb8" font-weight="700" text-anchor="middle" >1</text>
<text x="1788.8" y="914" font-family="Liberation Sans" font-size="15.4" fill="#1a1c21" text-anchor="middle" >2</text>
<text x="1818.3999999999999" y="914" font-family="Liberation Sans" font-size="15.4" fill="#1a1c21" text-anchor="middle" >3</text>
<text x="1848.0" y="914" font-family="Liberation Sans" font-size="15.4" fill="#1a1c21" text-anchor="middle" >4</text>
<text x="1877.6" y="914" font-family="Liberation Sans" font-size="15.4" fill="#1a1c21" text-anchor="middle" >5</text>
<path d="M1904,903 L1910,909 L1904,915" fill="none" stroke="#1a1c21" stroke-width="1.3" />
</svg>
</body></html>
